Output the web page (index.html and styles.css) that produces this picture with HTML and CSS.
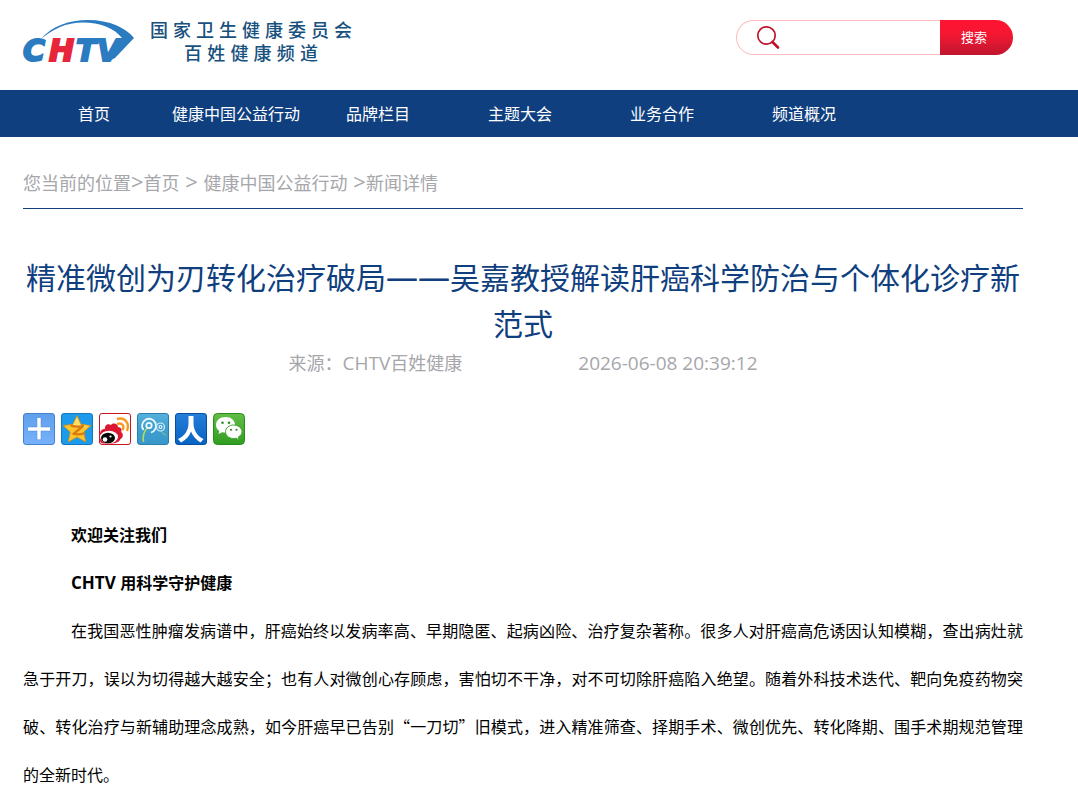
FILE: index.html
```html
<!DOCTYPE html>
<html lang="zh-CN">
<head>
<meta charset="utf-8">
<meta name="viewport" content="width=device-width, initial-scale=1">
<title>CHTV百姓健康</title>
<link rel="stylesheet" href="styles.css">
</head>
<body>
<header class="header wrap">
  <a class="logo" href="#">
    <svg class="logo-mark" viewBox="0 0 112 46" role="img" aria-label="CHTV">
      <path d="M18 21C29 8 46 2 65 2C87 2 103 10 111 20L99 20C91 10 77 4.500 60 4.500C43 4.500 30 11 18 21Z" fill="#2b7bc0"/>
      <path d="M96 20H111L92 40L84 44Z" fill="#2b7bc0"/>
      <g class="logo-letters">
        <text class="logo-blue" x="0" y="43">C</text>
        <text class="logo-blue" x="53" y="43">T</text>
        <text class="logo-blue" x="74" y="43">V</text>
        <text class="logo-red" x="26" y="43">H</text>
      </g>
    </svg>
    <span class="logo-text">
      <span class="logo-line">国家卫生健康委员会</span>
      <span class="logo-line logo-line-short">百姓健康频道</span>
    </span>
  </a>
  <form class="search">
    <svg class="search-icon" viewBox="0 0 26 26" aria-hidden="true">
      <circle cx="10.500" cy="10.500" r="8.700" fill="none" stroke="#c0132b" stroke-width="1.700"/>
      <path d="M16.500 17L22 22.500" stroke="#c0132b" stroke-width="2.600" stroke-linecap="round"/>
    </svg>
    <input class="search-input" type="text" aria-label="搜索">
    <button class="search-button" type="submit">搜索</button>
  </form>
</header>

<nav class="nav">
  <div class="nav-list wrap">
    <a class="nav-link" href="#">首页</a>
    <a class="nav-link" href="#">健康中国公益行动</a>
    <a class="nav-link" href="#">品牌栏目</a>
    <a class="nav-link" href="#">主题大会</a>
    <a class="nav-link" href="#">业务合作</a>
    <a class="nav-link" href="#">频道概况</a>
  </div>
</nav>

<main class="wrap">
  <div class="breadcrumb">您当前的位置<span class="separator">&gt;</span><a href="#">首页</a><span class="separator"> &gt; </span><a href="#">健康中国公益行动</a><span class="separator"> &gt;</span>新闻详情</div>
  <h1 class="title">精准微创为刃转化治疗破局<span class="dash">——</span>吴嘉教授解读肝癌科学防治与个体化诊疗新范式</h1>
  <div class="meta">
    <span>来源：<span class="meta-latin">CHTV</span>百姓健康</span>
    <time class="meta-latin" datetime="2026-06-08T20:39:12">2026-06-08 20:39:12</time>
  </div>

  <div class="share">
    <a href="#" aria-label="更多">
      <svg viewBox="0 0 32 32">
        <defs><linearGradient id="g1" x2="0" y2="1"><stop stop-color="#5f9fec"/><stop offset="1" stop-color="#78b1fa"/></linearGradient></defs>
        <rect x=".5" y=".5" width="31" height="31" rx="2.500" fill="url(#g1)" stroke="#4682cf"/>
        <path d="M16 5.500V27M5 16H27" stroke="#4b88d6" stroke-width="4.500"/>
        <path d="M16 5V26.500M5 16H27" stroke="#fff" stroke-width="3.500"/>
      </svg>
    </a>
    <a href="#" aria-label="QQ空间">
      <svg viewBox="0 0 32 32">
        <rect x=".5" y=".5" width="31" height="31" rx="2.500" fill="#1c9bec" stroke="#1477c0"/>
        <path d="M16 2.500L20 11.300L30 12.500L22.700 19L24.800 29L16 24L7.200 29L9.300 19L2 12.500L12 11.300Z" fill="#ffc62b" stroke="#d88910" stroke-width=".8" stroke-linejoin="round"/>
        <path d="M16 4L19.300 12L28 13L18 16L12 12Z" fill="#ffe067"/>
        <path d="M9.500 12.500C14 14 18 14 22 13L12.500 21C17 22 20 21.500 24 20" fill="none" stroke="#d87a12" stroke-width="2.300" stroke-linejoin="round"/>
      </svg>
    </a>
    <a href="#" aria-label="新浪微博">
      <svg viewBox="0 0 32 32">
        <rect x=".5" y=".5" width="31" height="31" rx="2.500" fill="#fff" stroke="#c8161e"/>
        <path d="M1 20C1.500 17 4 15.500 6 16C5.500 12 9 10 12 12C14 9.500 19 10.500 19 14C22 14 23.500 17 22 19C25 21 24 25 21.500 26C20 29.500 16 30.500 12 30.500H4C2 30.500 1 29 1 27Z" fill="#dc1731"/>
        <ellipse cx="10" cy="24" rx="9" ry="6.300" fill="#fff"/>
        <ellipse cx="9" cy="25" rx="7" ry="5.200" fill="#080808"/>
        <circle cx="6" cy="26.500" r="2.300" fill="#fff"/><circle cx="11.500" cy="23.500" r="1.100" fill="#fff"/>
        <path d="M18 6C26 4 31 10 28 18M18 11C23 9 26 13 23.500 17" fill="none" stroke="#f69b20" stroke-width="2.400"/>
      </svg>
    </a>
    <a href="#" aria-label="腾讯微博">
      <svg viewBox="0 0 32 32">
        <defs><linearGradient id="g4" x2="0" y2="1"><stop stop-color="#56b1dc"/><stop offset=".5" stop-color="#3d9fce"/><stop offset="1" stop-color="#3998cb"/></linearGradient></defs>
        <rect x=".5" y=".5" width="31" height="31" rx="2.500" fill="url(#g4)" stroke="#2c7fac"/>
        <path d="M11 14C7 18 5.500 23 6.500 29" fill="none" stroke="#b5dc58" stroke-width="1.600"/>
        <path d="M24 18C25 20 26.500 21 29 22" fill="none" stroke="#8fcf8a" stroke-width="1"/>
        <path d="M6.500 17A7 7 0 1 1 14 19.500" fill="none" stroke="#effaff" stroke-width="1.800"/>
        <circle cx="12" cy="12.500" r="2.700" fill="none" stroke="#effaff" stroke-width="1.800"/>
        <circle cx="23.500" cy="14" r="4" fill="none" stroke="#d9f0fa" stroke-width="1.200"/>
        <circle cx="23.500" cy="14" r="1.500" fill="none" stroke="#effaff" stroke-width="1.200"/>
      </svg>
    </a>
    <a href="#" aria-label="人人网">
      <svg viewBox="0 0 32 32">
        <defs><linearGradient id="g5" x2="0" y2="1"><stop stop-color="#257ed8"/><stop offset="1" stop-color="#0762c3"/></linearGradient></defs>
        <rect x=".5" y=".5" width="31" height="31" rx="2.500" fill="url(#g5)" stroke="#064f9f"/>
        <path d="M13.500 3H18.500V10C18.500 17 22 23 28.500 26L25.500 29.500C21 27 17.500 22.500 16 18.500C14.500 23 11 27 6 29.500L3 26C10 23 13.500 17 13.500 10Z" fill="#fff"/>
      </svg>
    </a>
    <a href="#" aria-label="微信">
      <svg viewBox="0 0 32 32">
        <defs><linearGradient id="g6" x2="0" y2="1"><stop stop-color="#63bd47"/><stop offset="1" stop-color="#309d20"/></linearGradient></defs>
        <rect x=".5" y=".5" width="31" height="31" rx="4" fill="url(#g6)" stroke="#278c19"/>
        <path d="M12.500 4C7 4 3 7.500 3 12C3 14.500 4.300 16.500 6.300 18L5.500 21L9 19.300C17 21 22 17 22 12C22 7.500 18 4 12.500 4Z" fill="#fff"/>
        <path d="M20.500 12C16 12 12.500 15 12.500 18.700C12.500 23 17 26.500 23 25.200L26 27L25.300 24C27.500 22.700 29 21 29 18.700C29 15 25 12 20.500 12Z" fill="#fff" stroke="#48a635" stroke-width="1"/>
        <g fill="#378c2a"><circle cx="9.500" cy="9.700" r="1.300"/><circle cx="16" cy="9.700" r="1.300"/><circle cx="18" cy="16.800" r="1.100"/><circle cx="23.500" cy="16.800" r="1.100"/></g>
      </svg>
    </a>
  </div>

  <article class="article">
    <p><strong>欢迎关注我们</strong></p>
    <p><strong><span class="latin">CHTV </span>用科学守护健康</strong></p>
    <p>在我国恶性肿瘤发病谱中，肝癌始终以发病率高、早期隐匿、起病凶险、治疗复杂著称。很多人对肝癌高危诱因认知模糊，查出病灶就急于开刀，误以为切得越大越安全；也有人对微创心存顾虑，害怕切不干净，对不可切除肝癌陷入绝望。随着外科技术迭代、靶向免疫药物突破、转化治疗与新辅助理念成熟，如今肝癌早已告别“一刀切”旧模式，进入精准筛查、择期手术、微创优先、转化降期、围手术期规范管理的全新时代。</p>
  </article>
</main>
</body>
</html>
```

FILE: styles.css
```css
* {
  box-sizing: border-box;
}

body {
  margin: 0;
  background: #fff;
  color: #000;
  font-family: "Open Sans", "Noto Sans CJK SC", sans-serif;
  font-size: 16px;
}

a {
  color: inherit;
  text-decoration: none;
}

.wrap {
  max-width: 1000px;
  margin: 0 32px 0 23px;
}

.header {
  display: flex;
  justify-content: space-between;
  align-items: flex-start;
  height: 90px;
  padding: 18px 10px 0 0;
}

.logo {
  display: flex;
  gap: 15px;
}

.logo-mark {
  width: 112px;
  height: 46px;
  overflow: visible;
}

.logo-letters {
  font: italic bold 30px "DejaVu Sans", sans-serif;
  stroke-width: 2px;
}

.logo-blue {
  fill: #2b7bc0;
  stroke: #2b7bc0;
}

.logo-red {
  fill: #e8263b;
  stroke: #e8263b;
}

.logo-text {
  display: flex;
  flex-direction: column;
  align-items: center;
  width: 202px;
  padding-top: 1px;
  color: #18517e;
  font-size: 18px;
  font-weight: 500;
  line-height: 23px;
}

.logo-line {
  width: 100%;
  text-align-last: justify;
}

.logo-line-short {
  width: 134px;
}

.search {
  display: flex;
  align-items: center;
  width: 277px;
  height: 35px;
  margin-top: 2px;
  border: 1px solid #ffbcc0;
  border-right: 0;
  border-radius: 18px;
}

.search-icon {
  flex: none;
  width: 26px;
  height: 26px;
  margin-left: 19px;
}

.search-input {
  flex: 1;
  min-width: 0;
  height: 100%;
  padding: 0 8px;
  border: 0;
  outline: 0;
  background: none;
  font: inherit;
}

.search-button {
  flex: none;
  width: 73px;
  height: 35px;
  padding: 0 5px 2px 0;
  border: 0;
  border-radius: 0 18px 18px 0;
  background: linear-gradient(#ff1433, #f51732 40%, #c0162f);
  color: #fff;
  font: 13px "Noto Sans CJK SC", sans-serif;
}

.nav {
  background: #103f80;
  color: #fff;
}

.nav-list {
  display: flex;
  padding-top: 1px;
}

.nav-link {
  width: 142px;
  line-height: 46px;
  text-align: center;
  white-space: nowrap;
}

.breadcrumb {
  padding: 30px 0 9px;
  border-bottom: 1px solid #103f80;
  color: #a6a6ab;
  font-size: 18px;
  line-height: 32px;
}

.separator {
  font-size: 22px;
  line-height: 1;
}

.title {
  margin: 46px 0 0;
  color: #103f80;
  font-size: 30px;
  font-weight: 400;
  line-height: 46px;
  text-align: center;
}

.dash {
  font-size: 32px;
  line-height: 1;
}

.meta {
  display: flex;
  justify-content: center;
  gap: 116px;
  color: #a6a6ab;
  font-size: 18px;
  line-height: 32px;
}

.meta-latin {
  font-size: 19px;
}

.share {
  display: flex;
  gap: 6px;
  margin-top: 34px;
}

.share a,
.share svg {
  display: block;
  width: 32px;
  height: 32px;
}

.article {
  margin-top: 65px;
  font-family: "Noto Sans CJK SC", sans-serif;
  line-height: 48px;
  text-align: justify;
}

.article p {
  margin: 0;
  text-indent: 48px;
}

.latin {
  font-family: "Open Sans", sans-serif;
  font-size: 17px;
  line-height: 1;
}
```
